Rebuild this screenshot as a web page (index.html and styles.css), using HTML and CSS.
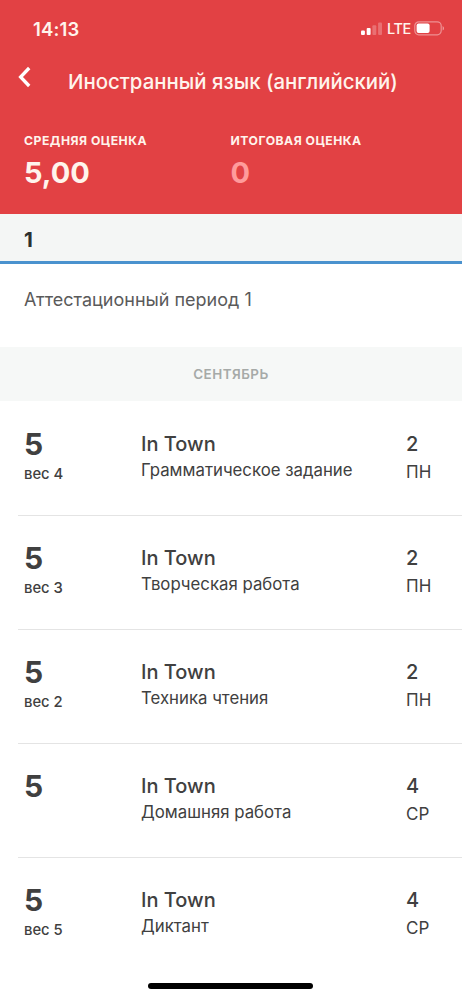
FILE: index.html
```
<!DOCTYPE html>
<html lang="ru">
<head>
<meta charset="utf-8">
<title>Иностранный язык (английский)</title>
<link rel="stylesheet" href="styles.css">
</head>
<body>
<div class="screen">
  <header class="header">
    <div class="status">
      <span class="time">14:13</span>
      <div class="indicators">
        <svg class="signal" width="22" height="14" viewBox="0 0 22 14" fill="#fff"><rect x="0" y="8.5" width="3.9" height="4.5" rx="1"/><rect x="5.7" y="6" width="3.9" height="7" rx="1"/><rect x="11.4" y="3.2" width="3.9" height="9.8" rx="1" opacity=".25"/><rect x="17.1" y="0.5" width="3.9" height="12.5" rx="1" opacity=".25"/></svg>
        <span class="network">LTE</span>
        <svg class="battery" width="31" height="15" viewBox="0 0 31 15"><rect x=".8" y=".8" width="26.4" height="13" rx="4" fill="none" stroke="#fff" stroke-opacity=".42" stroke-width="1.2"/><rect x="2.6" y="2.6" width="13" height="9.4" rx="2" fill="#fff"/><path d="M28.7 5v4.6c1.6-.7 1.6-3.9 0-4.6z" fill="#fff" fill-opacity=".55"/></svg>
      </div>
    </div>
    <div class="nav">
      <svg class="back" width="16" height="22" viewBox="0 0 16 22"><path d="M12.2 2L3.6 11l8.6 9" fill="none" stroke="#fff" stroke-width="3.3"/></svg>
      <h1 class="title">Иностранный язык (английский)</h1>
    </div>
    <div class="grades">
      <div class="grade"><div class="grade-label">СРЕДНЯЯ ОЦЕНКА</div><div class="grade-value">5,00</div></div>
      <div class="grade"><div class="grade-label">ИТОГОВАЯ ОЦЕНКА</div><div class="grade-value muted">0</div></div>
    </div>
  </header>
  <nav class="tabs"><span class="tab">1</span></nav>
  <div class="period">Аттестационный период 1</div>
  <div class="month">СЕНТЯБРЬ</div>
  <main class="list">
    <div class="row"><div class="mark"><b>5</b><span>вес 4</span></div><div class="lesson"><b>In Town</b><span>Грамматическое задание</span></div><div class="date"><b>2</b><span>ПН</span></div></div>
    <div class="row"><div class="mark"><b>5</b><span>вес 3</span></div><div class="lesson"><b>In Town</b><span>Творческая работа</span></div><div class="date"><b>2</b><span>ПН</span></div></div>
    <div class="row"><div class="mark"><b>5</b><span>вес 2</span></div><div class="lesson"><b>In Town</b><span>Техника чтения</span></div><div class="date"><b>2</b><span>ПН</span></div></div>
    <div class="row"><div class="mark"><b>5</b></div><div class="lesson"><b>In Town</b><span>Домашняя работа</span></div><div class="date"><b>4</b><span>СР</span></div></div>
    <div class="row"><div class="mark"><b>5</b><span>вес 5</span></div><div class="lesson"><b>In Town</b><span>Диктант</span></div><div class="date"><b>4</b><span>СР</span></div></div>
  </main>
  <div class="home-indicator"></div>
</div>
</body>
</html>
```
FILE: styles.css
```
* { box-sizing: border-box; }
body { margin: 0; background: #fff; font-family: Inter, sans-serif; color: #404040; }
.screen { position: relative; width: 462px; height: 1000px; overflow: hidden; background: #fff; }
.header { height: 214px; background: #e24144; color: #fff4ec; }
.status { display: flex; justify-content: space-between; height: 57px; padding: 0 17px 0 33px; align-items: center; }
.time { font-size: 18.5px; font-weight: 600; line-height: 24px; letter-spacing: .15px; }
.indicators { display: flex; align-items: center; }
.signal { margin-right: 4px; }
.network { font-size: 14.5px; font-weight: 500; line-height: 20px; letter-spacing: -.4px; width: 27px; padding-top: 1px; }
.nav { display: flex; height: 49px; padding-left: 17px; }
.back { margin-top: 9px; }
.title { margin: 0 0 0 35px; font-size: 20.4px; font-weight: 500; line-height: 49px; white-space: nowrap; }
.grades { display: grid; grid-template-columns: 206.5px 1fr; padding: 25px 0 0 24px; }
.grade-label { font-size: 12.2px; font-weight: 700; line-height: 20px; letter-spacing: .5px; white-space: nowrap; }
.grade-value { margin-top: 4px; font-size: 29px; font-weight: 700; line-height: 36px; }
.muted { color: #ff9b9b; }
.tabs { height: 50px; padding-left: 24px; background: #f4f6f5; border-bottom: 3px solid #4a92ce; }
.tab { font-size: 20.5px; font-weight: 700; line-height: 51px; color: #2c302f; }
.period { height: 83px; padding: 22px 0 0 24px; font-size: 18px; line-height: 27px; color: #5a5a5a; }
.month { height: 54px; background: #f6f8f7; color: #a6aaa8; text-align: center; font-size: 13.4px; font-weight: 600; line-height: 54px; letter-spacing: .5px; }
.row { position: relative; display: grid; grid-template-columns: 117px 265px 1fr; height: 114px; padding: 28px 0 0 24px; }
.row b, .row span { display: block; white-space: nowrap; }
.row:not(:last-child)::after { content: ""; position: absolute; left: 18px; right: 0; bottom: -1px; height: 1px; background: #e4e4e4; }
.mark b { font-size: 30px; font-weight: 700; line-height: 30px; }
.mark span { font-size: 14.8px; font-weight: 500; line-height: 20px; margin-top: 5px; }
.lesson b, .date b { font-size: 20px; font-weight: 500; line-height: 30px; }
.lesson span { font-size: 16.8px; line-height: 22px; }
.date span { font-size: 17px; line-height: 26px; }
.home-indicator { position: absolute; left: 148px; top: 983px; width: 165px; height: 6px; border-radius: 3px; background: #000; }
```
